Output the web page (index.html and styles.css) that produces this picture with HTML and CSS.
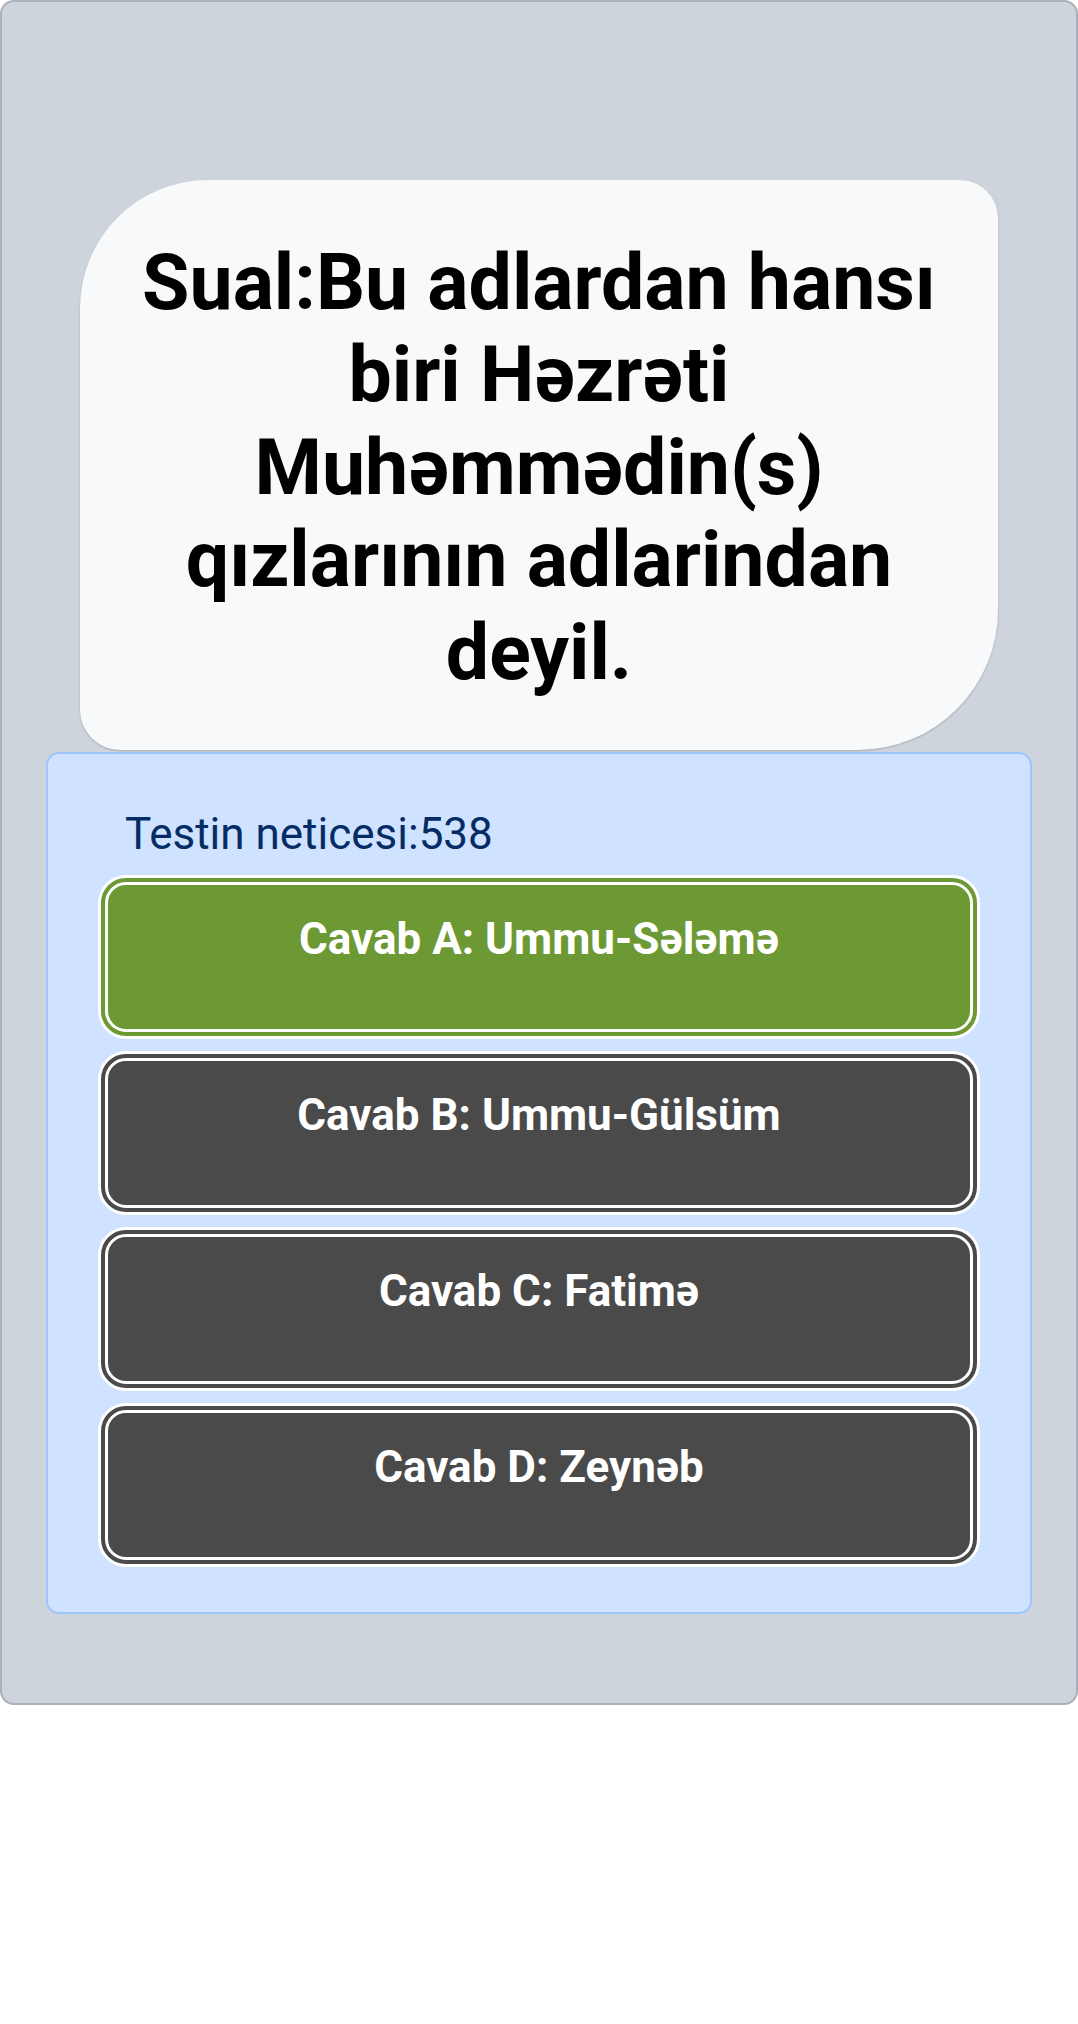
FILE: index.html
```html
<!DOCTYPE html>
<html lang="az">
<head>
    <meta charset="UTF-8">
    <meta name="viewport" content="width=device-width, initial-scale=1.0">
    <title>Sual və cavablar</title>
    <link rel="stylesheet" href="styles.css">
</head>
<body>
    <div class="quiz-box">
        <!-- Question -->
        <div class="question-card">
            <h1 class="question-text">Sual:Bu adlardan hansı biri Həzrəti Muhəmmədin(s) qızlarının adlarindan deyil.</h1>
        </div>

        <!-- Score and answers -->
        <div class="answers-panel">
            <p class="score">Testin neticesi:538</p>
            <div class="answer-list">
                <button class="answer answer-correct">Cavab A: Ummu-Sələmə</button>
                <button class="answer">Cavab B: Ummu-Gülsüm</button>
                <button class="answer">Cavab C: Fatimə</button>
                <button class="answer">Cavab D: Zeynəb</button>
            </div>
        </div>
    </div>
</body>
</html>
```

FILE: styles.css
```css
body {
    font-family: Roboto, "Liberation Sans", Arial, sans-serif;
    margin: 0;
    padding: 0;
    background: #fff;
}

.quiz-box {
    background: #ced4db;
    border: 2px solid #a9b1ba;
    border-radius: 14px;
    padding: 178px 0 89px;
}

.question-card {
    margin: 0 78px;
    padding: 57px 40px 51px;
    background: #f8f9fa;
    border-radius: 128px 38px 140px 40px;
    box-shadow: 0 1px 2px rgba(0, 0, 0, 0.2);
}

.question-text {
    margin: 0;
    font-size: 77px;
    line-height: 1.2;
    font-weight: 700;
    text-align: center;
    color: #000;
}

.answers-panel {
    margin: 2px 44px 0;
    padding: 47px 50px 45px;
    background: #cfe2ff;
    border: 2px solid #9ec5fe;
    border-radius: 13px;
}

.score {
    margin: 0 0 8px 27px;
    font-size: 44px;
    line-height: 66px;
    color: #052c65;
}

.answer-list {
    display: flex;
    flex-direction: column;
    gap: 12px;
}

/* text sits at the top of the button, not in the middle */
.answer {
    display: flex;
    align-items: flex-start;
    justify-content: center;
    width: 100%;
    height: 164px;
    box-sizing: border-box;
    padding: 21px 20px 0;
    font-family: inherit;
    font-size: 44px;
    line-height: 66px;
    font-weight: 700;
    color: #fff;
    background: #4a4a4a;
    border: 10px double #fff;
    border-radius: 28px;
    cursor: pointer;
}

.answer-correct {
    background: #6d9934;
}
```
